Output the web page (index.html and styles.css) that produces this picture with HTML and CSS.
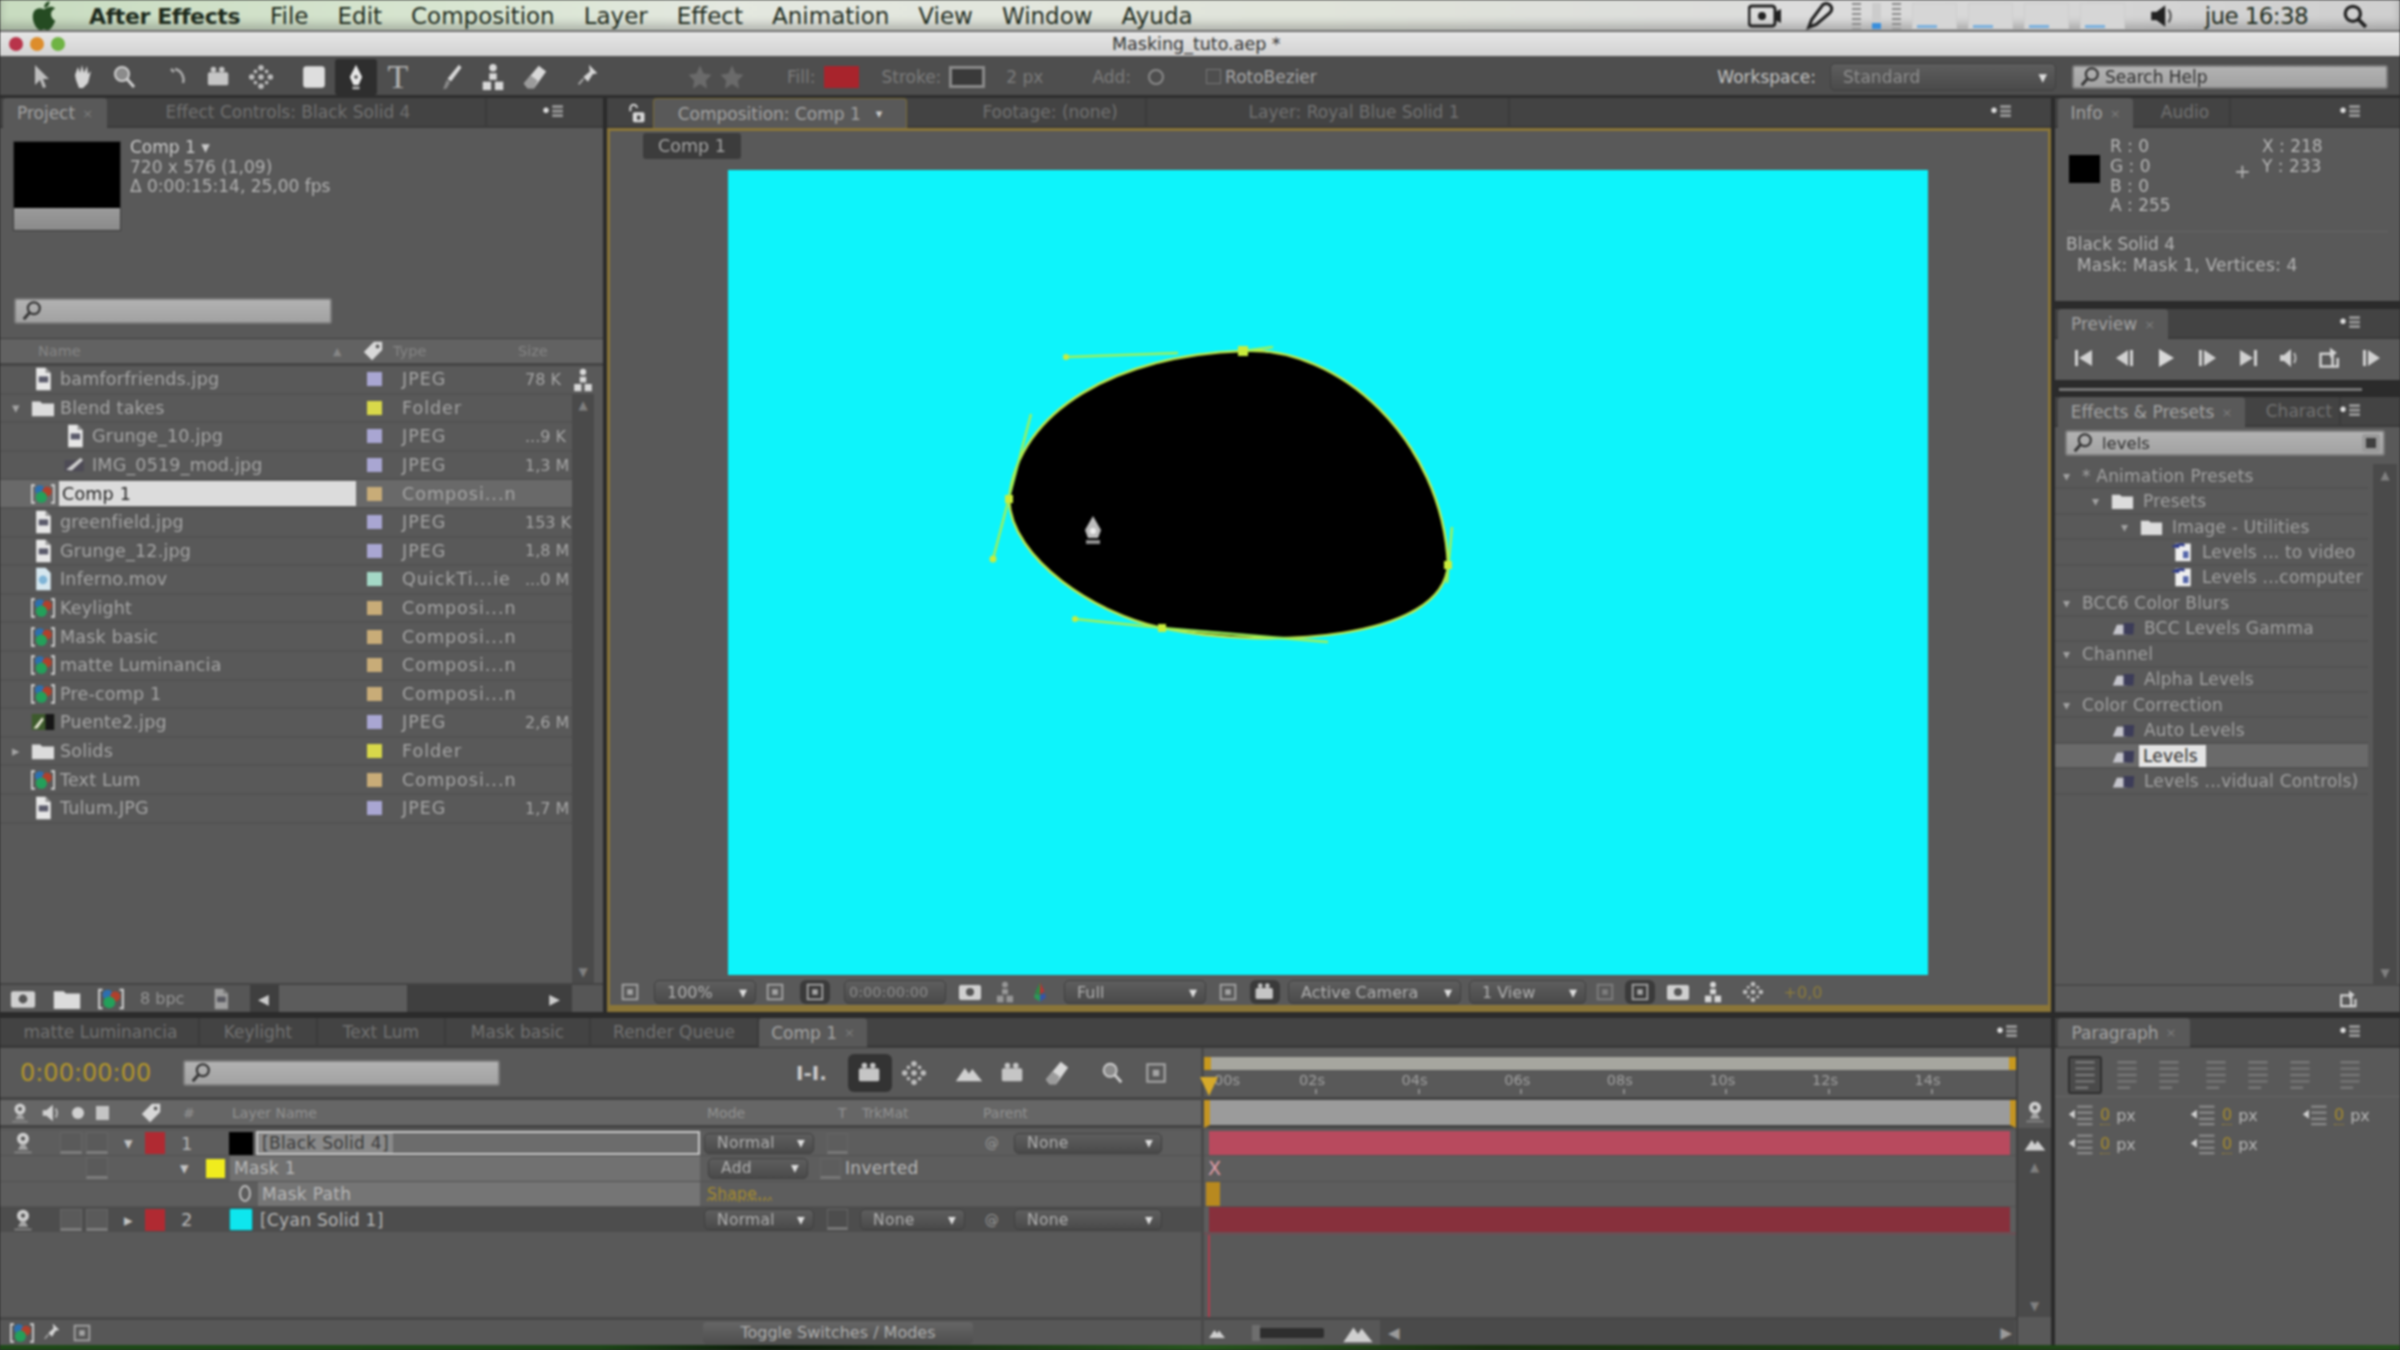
FILE: index.html
```html
<!DOCTYPE html>
<html lang="en">
<head>
    <meta charset="UTF-8">
    <title>After Effects - Masking_tuto.aep</title>
    <link rel="stylesheet" href="styles.css">
</head>
<body>

<svg class="sprite" width="0" height="0">
    <symbol id="file" viewBox="0 0 24 28"><path d="M4 1h11l6 6v20H4z" fill="#e6e6e6"/><path d="M15 1v6h6" fill="#999"/><rect x="7" y="11" width="11" height="7" fill="#5b5b6b"/></symbol>
    <symbol id="mov" viewBox="0 0 24 28"><path d="M4 1h11l6 6v20H4z" fill="#d5e6ee"/><circle cx="12" cy="15" r="5" fill="#7fb4d6"/></symbol>
    <symbol id="folder" viewBox="0 0 26 20"><path d="M1 3h9l2 2h13v14H1z" fill="#dcdcdc"/></symbol>
    <symbol id="comp" viewBox="0 0 30 26"><path d="M5 2H1v22h4M25 2h4v22h-4" fill="none" stroke="#d0d0d0" stroke-width="2.4"/><circle cx="11" cy="8" r="6" fill="#2d6fb0"/><circle cx="20" cy="10" r="6" fill="#b0402c"/><circle cx="13" cy="17" r="7" fill="#23a05a"/></symbol>
    <symbol id="photo" viewBox="0 0 30 24"><rect x="1" y="2" width="28" height="20" fill="#3d5a2c"/><rect x="18" y="2" width="11" height="20" fill="#161616"/><path d="M3 20L14 6l2 3-8 11z" fill="#e4e4d0"/></symbol>
    <symbol id="img" viewBox="0 0 30 24"><rect x="2" y="6" width="24" height="14" fill="#4d4a55"/><path d="M4 18L22 3l3 3-14 13z" fill="#ccc"/></symbol>
    <symbol id="fx" viewBox="0 0 28 20"><path d="M1 18L6 6h12v12z" fill="#c5c5cc"/><path d="M14 4h13l-1 14H14z" fill="#3c3c58"/></symbol>
    <symbol id="preset" viewBox="0 0 28 26"><rect x="6" y="2" width="20" height="23" fill="#eee"/><path d="M1 6Q8 0 18 2v4l-6-1-2 3z" fill="#2e3a88"/><rect x="16" y="12" width="7" height="9" fill="#5566aa"/></symbol>
    <symbol id="mag" viewBox="0 0 24 24"><circle cx="14" cy="9" r="6.5" fill="none" stroke="#333" stroke-width="2.4"/><path d="M9 14L3 21" stroke="#333" stroke-width="3.2"/></symbol>
    <symbol id="pmenu" viewBox="0 0 26 18"><circle cx="4" cy="7" r="3" fill="#ddd"/><path d="M11 3h12M11 8h12M11 13h12" stroke="#9a9a9a" stroke-width="3"/></symbol>
    <symbol id="eye" viewBox="0 0 24 28"><circle cx="12" cy="9" r="7" fill="#cfcfcf"/><circle cx="12" cy="9" r="2.5" fill="#555"/><path d="M10 15h4l4 7H6z" fill="#a5a5a5"/><rect x="2" y="24" width="20" height="2" fill="#8a8a8a"/></symbol>
    <symbol id="tag" viewBox="0 0 24 24"><path d="M2 13L13 2h9v9L11 22z" fill="#d8d8d8"/><circle cx="17" cy="7" r="2" fill="#555"/></symbol>
    <symbol id="arrow" viewBox="0 0 24 28"><path d="M7 2v20l5-5 3 8 3-1-3-8h6z" fill="#bdbdbd"/></symbol>
    <symbol id="hand" viewBox="0 0 24 28"><path d="M5 12l3-8 2 6 2-8 2 8 3-7 1 8 3-3-3 12-5 5H9l-3-8z" fill="#d5d5d5"/></symbol>
    <symbol id="zoomtool" viewBox="0 0 24 28"><circle cx="10" cy="11" r="7" fill="#8b8b8b" stroke="#cfcfcf" stroke-width="2"/><path d="M15 16l7 8" stroke="#cfcfcf" stroke-width="3"/></symbol>
    <symbol id="rotate" viewBox="0 0 24 28"><path d="M6 6l3 3M10 6a11 11 0 0 1 8 14" fill="none" stroke="#aaa" stroke-width="2.5"/></symbol>
    <symbol id="camera" viewBox="0 0 28 28"><rect x="2" y="9" width="22" height="14" rx="2" fill="#c5c5c5"/><circle cx="8" cy="6" r="3" fill="#c5c5c5"/><circle cx="17" cy="6" r="3" fill="#c5c5c5"/></symbol>
    <symbol id="panbehind" viewBox="0 0 28 28"><g fill="#bdbdbd"><circle cx="14" cy="4" r="3"/><circle cx="14" cy="24" r="3"/><circle cx="4" cy="14" r="3"/><circle cx="24" cy="14" r="3"/><circle cx="8" cy="8" r="2"/><circle cx="20" cy="8" r="2"/><circle cx="8" cy="20" r="2"/><circle cx="20" cy="20" r="2"/><circle cx="14" cy="14" r="3"/></g></symbol>
    <symbol id="rect" viewBox="0 0 24 24"><rect x="2" y="2" width="20" height="20" rx="3" fill="#dedede"/></symbol>
    <symbol id="pen" viewBox="0 0 24 32"><path d="M12 2l7 14-4 9H9l-4-9z" fill="#e8e8e8"/><circle cx="12" cy="16" r="2" fill="#444"/><rect x="8" y="27" width="8" height="3" fill="#bbb"/></symbol>
    <symbol id="brush" viewBox="0 0 24 32"><path d="M21 2l3 3-12 16-4-3z" fill="#d8d8d8"/><path d="M7 19l4 3-4 7-4 1z" fill="#888"/></symbol>
    <symbol id="clone" viewBox="0 0 26 30"><g fill="#d8d8d8"><circle cx="13" cy="5" r="4"/><rect x="9" y="11" width="8" height="7"/><rect x="2" y="20" width="9" height="9"/><rect x="15" y="20" width="9" height="9"/></g></symbol>
    <symbol id="eraser" viewBox="0 0 28 28"><path d="M18 2l8 6-13 18H6l-4-5z" fill="#d8d8d8"/><path d="M2 21l7-9 8 6-4 8H6z" fill="#9b9b9b"/></symbol>
    <symbol id="puppet" viewBox="0 0 26 30"><path d="M14 2l9 9-5 1-5 8-5-5 7-6z" fill="#d5d5d5"/><path d="M8 17l-5 6" stroke="#aaa" stroke-width="2"/></symbol>
    <symbol id="star" viewBox="0 0 24 24"><path d="M12 2l3 7 7 1-5 5 1 7-6-4-6 4 1-7-5-5 7-1z" fill="#6a6a6a"/></symbol>
    <symbol id="cam" viewBox="0 0 24 20"><rect x="1" y="3" width="22" height="15" rx="2" fill="#d0d0d0"/><circle cx="12" cy="10" r="4" fill="#555"/></symbol>
    <symbol id="small" viewBox="0 0 24 24"><rect x="4" y="4" width="16" height="16" fill="none" stroke="#a5a5a5" stroke-width="2"/><rect x="9" y="9" width="6" height="6" fill="#a5a5a5"/></symbol>
    <symbol id="rgb" viewBox="0 0 24 30"><path d="M12 2l6 12-6 4z" fill="#b33"/><path d="M12 2L5 16l7 2z" fill="#2c8a44"/><path d="M5 17l7 2v9l-8-5z" fill="#2b9a55"/><path d="M19 17l-7 2v9l8-5z" fill="#3555aa"/></symbol>
    <symbol id="mount" viewBox="0 0 34 24"><path d="M1 22L12 6l5 7 4-6 12 15z" fill="#cfcfcf"/></symbol>
    <symbol id="speaker" viewBox="0 0 24 24"><path d="M2 8h5l8-6v20l-8-6H2z" fill="#222"/><path d="M18 6q4 6 0 12" fill="none" stroke="#555" stroke-width="2"/></symbol>
    <symbol id="para" viewBox="0 0 30 40"><path d="M3 4h24M3 12h24M3 20h24M3 28h24M3 36h16" stroke="#777" stroke-width="3"/></symbol>
    <symbol id="indent" viewBox="0 0 34 30"><path d="M12 4h20M12 12h20M12 20h20M12 27h20" stroke="#8a8a8a" stroke-width="3"/><path d="M1 14l8-6v12z" fill="#d0d0d0"/></symbol>
    <symbol id="playfirst" viewBox="0 0 24 24"><path d="M3 4h3v16H3zM20 4v16L7 12z" fill="#d0d0d0"/></symbol>
    <symbol id="stepback" viewBox="0 0 24 24"><path d="M15 4v16L3 12zM17 4h3v16h-3z" fill="#d0d0d0"/></symbol>
    <symbol id="play" viewBox="0 0 24 24"><path d="M5 3v18l15-9z" fill="#d8d8d8"/></symbol>
    <symbol id="stepfwd" viewBox="0 0 24 24"><path d="M4 4h3v16H4zM9 4v16l12-8z" fill="#d0d0d0"/></symbol>
    <symbol id="playlast" viewBox="0 0 24 24"><path d="M4 4v16l13-8zM18 4h3v16h-3z" fill="#d0d0d0"/></symbol>
    <symbol id="audio" viewBox="0 0 24 24"><path d="M3 9h4l7-6v18l-7-6H3z" fill="#d0d0d0"/><path d="M17 7q3 5 0 10" stroke="#bbb" stroke-width="2" fill="none"/></symbol>
    <symbol id="loop" viewBox="0 0 28 28"><path d="M3 9h14v15H3z" fill="none" stroke="#d0d0d0" stroke-width="3"/><path d="M14 2l8 6-8 6z" fill="#d0d0d0"/><path d="M23 14v10h-6" fill="none" stroke="#d0d0d0" stroke-width="3"/></symbol>
    <symbol id="lockic" viewBox="0 0 24 24"><path d="M4 10V6a4 4 0 0 1 8 0" fill="none" stroke="#d0d0d0" stroke-width="2.4"/><rect x="7" y="11" width="14" height="12" rx="2" fill="#d8d8d8"/><rect x="12" y="15" width="4" height="5" fill="#444"/></symbol>
</svg>

<div class="app">

    <!-- mac menu bar -->
    <header class="menubar">
        <svg class="apple" viewBox="0 0 28 32"><path d="M14 9C9 6 2 8 2 17c0 7 5 14 8 14 2 0 3-1 4-1s2 1 4 1c3 0 6-5 8-10-6-3-6-11 0-13-3-3-8-2-12 1zM14 7c0-3 2-6 6-7 0 4-2 7-6 7z" fill="#254b22"/></svg>
        <span class="app-name">After Effects</span>
        <nav class="menus">
            <span>File</span><span>Edit</span><span>Composition</span><span>Layer</span><span>Effect</span><span>Animation</span><span>View</span><span>Window</span><span>Ayuda</span>
        </nav>
        <div class="status">
            <svg class="st-cam" viewBox="0 0 34 26"><rect x="1" y="3" width="26" height="20" rx="3" fill="none" stroke="#222" stroke-width="3"/><circle cx="14" cy="13" r="4" fill="#222"/><path d="M27 9l6-3v14l-6-3z" fill="#222"/></svg>
            <svg class="st-tool" viewBox="0 0 30 30"><path d="M27 5a6 6 0 0 0-9-2l-12 16-3 8 8-3 14-12a6 6 0 0 0 2-7z" fill="none" stroke="#222" stroke-width="3.4"/></svg>
            <div class="meters">
                <i class="meter-bar"></i><i class="meter-bar blue"></i><i class="meter-bar"></i>
                <i class="meter-box"></i><i class="meter-box"></i><i class="meter-box"></i><i class="meter-box"></i>
            </div>
            <svg class="st-vol"><use href="#speaker"/></svg>
            <span class="clock">jue 16:38</span>
            <svg class="st-search" viewBox="0 0 24 24"><circle cx="10" cy="10" r="7" fill="none" stroke="#222" stroke-width="3"/><path d="M15 15l7 7" stroke="#222" stroke-width="3.5"/></svg>
        </div>
    </header>

    <div class="titlebar">
        <div class="lights"><i class="red"></i><i class="amber"></i><i class="green"></i></div>
        <span class="doc-title">Masking_tuto.aep *</span>
    </div>

    <div class="toolbar">
        <div class="tools">
            <div class="tool"><svg><use href="#arrow"/></svg></div>
            <div class="tool"><svg><use href="#hand"/></svg></div>
            <div class="tool"><svg><use href="#zoomtool"/></svg></div>
        </div>
        <div class="tools">
            <div class="tool"><svg><use href="#rotate"/></svg></div>
            <div class="tool"><svg><use href="#camera"/></svg></div>
            <div class="tool"><svg><use href="#panbehind"/></svg></div>
        </div>
        <div class="tools">
            <div class="tool"><svg><use href="#rect"/></svg></div>
            <div class="tool on"><svg><use href="#pen"/></svg></div>
            <div class="tool"><span class="t-glyph">T</span></div>
        </div>
        <div class="tools">
            <div class="tool"><svg><use href="#brush"/></svg></div>
            <div class="tool"><svg><use href="#clone"/></svg></div>
            <div class="tool"><svg><use href="#eraser"/></svg></div>
        </div>
        <div class="tools">
            <div class="tool"><svg><use href="#puppet"/></svg></div>
        </div>
        <div class="tool-opts">
            <svg class="dim-ic"><use href="#star"/></svg>
            <svg class="dim-ic"><use href="#star"/></svg>
            <span class="opt-fill">Fill:</span>
            <i class="fill-box"></i>
            <span class="opt-stroke">Stroke:</span>
            <i class="stroke-box"></i>
            <span class="opt-px">2 px</span>
            <span class="opt-add">Add:</span>
            <i class="add-ic"></i>
            <i class="roto-check"></i>
            <span class="opt-roto">RotoBezier</span>
        </div>
        <div class="workspace">
            <span class="ws-label">Workspace:</span>
            <div class="sel ws-sel">Standard</div>
            <div class="search help-search"><svg><use href="#mag"/></svg><span>Search Help</span></div>
        </div>
    </div>

    <main class="desk">

        <!-- project -->
        <section class="panel project">
            <div class="tabs">
                <div class="tab active project-tab">Project <em>×</em></div>
                <div class="tab ghost effect-tab">Effect Controls: Black Solid 4</div>
                <svg class="pmenu"><use href="#pmenu"/></svg>
            </div>
            <div class="proj-info">
                <div class="thumb"><i></i></div>
                <div class="proj-meta">
                    <div class="meta-name">Comp 1 ▾</div>
                    <div>720 x 576 (1,09)</div>
                    <div>Δ 0:00:15:14, 25,00 fps</div>
                </div>
            </div>
            <div class="search proj-search"><svg><use href="#mag"/></svg></div>
            <div class="list-head">
                <span class="lh-name">Name</span>
                <span class="lh-sort">▲</span>
                <svg class="lh-tag"><use href="#tag"/></svg>
                <span class="lh-type">Type</span>
                <span>Size</span>
            </div>
            <div class="list-wrap">
                <div class="list">
                    <div class="pr"><div class="pn"><i class="tw"></i><svg class="ic"><use href="#file"/></svg><span>bamforfriends.jpg</span></div><i class="sw jpeg"></i><span class="ty">JPEG</span><span class="sz">78 K</span></div>
                    <div class="pr"><div class="pn"><i class="tw">▾</i><svg class="ic"><use href="#folder"/></svg><span>Blend takes</span></div><i class="sw fold"></i><span class="ty">Folder</span><span class="sz"></span></div>
                    <div class="pr"><div class="pn lv1"><i class="tw"></i><svg class="ic"><use href="#file"/></svg><span>Grunge_10.jpg</span></div><i class="sw jpeg"></i><span class="ty">JPEG</span><span class="sz">...9 K</span></div>
                    <div class="pr"><div class="pn lv1"><i class="tw"></i><svg class="ic"><use href="#img"/></svg><span>IMG_0519_mod.jpg</span></div><i class="sw jpeg"></i><span class="ty">JPEG</span><span class="sz">1,3 M</span></div>
                    <div class="pr sel-row"><div class="pn"><i class="tw"></i><svg class="ic"><use href="#comp"/></svg><span class="editing">Comp 1</span></div><i class="sw compo"></i><span class="ty">Composi...n</span><span class="sz"></span></div>
                    <div class="pr"><div class="pn"><i class="tw"></i><svg class="ic"><use href="#file"/></svg><span>greenfield.jpg</span></div><i class="sw jpeg"></i><span class="ty">JPEG</span><span class="sz">153 K</span></div>
                    <div class="pr"><div class="pn"><i class="tw"></i><svg class="ic"><use href="#file"/></svg><span>Grunge_12.jpg</span></div><i class="sw jpeg"></i><span class="ty">JPEG</span><span class="sz">1,8 M</span></div>
                    <div class="pr"><div class="pn"><i class="tw"></i><svg class="ic"><use href="#mov"/></svg><span>Inferno.mov</span></div><i class="sw qt"></i><span class="ty">QuickTi...ie</span><span class="sz">...0 M</span></div>
                    <div class="pr"><div class="pn"><i class="tw"></i><svg class="ic"><use href="#comp"/></svg><span>Keylight</span></div><i class="sw compo"></i><span class="ty">Composi...n</span><span class="sz"></span></div>
                    <div class="pr"><div class="pn"><i class="tw"></i><svg class="ic"><use href="#comp"/></svg><span>Mask basic</span></div><i class="sw compo"></i><span class="ty">Composi...n</span><span class="sz"></span></div>
                    <div class="pr"><div class="pn"><i class="tw"></i><svg class="ic"><use href="#comp"/></svg><span>matte Luminancia</span></div><i class="sw compo"></i><span class="ty">Composi...n</span><span class="sz"></span></div>
                    <div class="pr"><div class="pn"><i class="tw"></i><svg class="ic"><use href="#comp"/></svg><span>Pre-comp 1</span></div><i class="sw compo"></i><span class="ty">Composi...n</span><span class="sz"></span></div>
                    <div class="pr"><div class="pn"><i class="tw"></i><svg class="ic"><use href="#photo"/></svg><span>Puente2.jpg</span></div><i class="sw jpeg"></i><span class="ty">JPEG</span><span class="sz">2,6 M</span></div>
                    <div class="pr"><div class="pn"><i class="tw">▸</i><svg class="ic"><use href="#folder"/></svg><span>Solids</span></div><i class="sw fold"></i><span class="ty">Folder</span><span class="sz"></span></div>
                    <div class="pr"><div class="pn"><i class="tw"></i><svg class="ic"><use href="#comp"/></svg><span>Text Lum</span></div><i class="sw compo"></i><span class="ty">Composi...n</span><span class="sz"></span></div>
                    <div class="pr"><div class="pn"><i class="tw"></i><svg class="ic"><use href="#file"/></svg><span>Tulum.JPG</span></div><i class="sw jpeg"></i><span class="ty">JPEG</span><span class="sz">1,7 M</span></div>
                </div>
                <div class="proj-side">
                    <div class="flow-ic"><svg><use href="#clone"/></svg></div>
                    <div class="vscroll"><span>▲</span><span>▼</span></div>
                </div>
            </div>
            <div class="proj-foot">
                <svg class="pf-ic"><use href="#cam"/></svg>
                <svg class="pf-ic"><use href="#folder"/></svg>
                <svg class="pf-ic"><use href="#comp"/></svg>
                <span class="bpc">8 bpc</span>
                <svg class="pf-ic trash"><use href="#file"/></svg>
                <div class="hscroll"><span>◀</span><i></i><span>▶</span></div>
            </div>
        </section>

        <!-- composition viewer -->
        <section class="panel comp">
            <div class="tabs">
                <svg class="lock"><use href="#lockic"/></svg>
                <div class="tab active comp-tab">Composition: Comp 1 <b>▾</b></div>
                <div class="tab ghost foot-tab">Footage: (none)</div>
                <div class="tab ghost layer-tab">Layer: Royal Blue Solid 1</div>
                <svg class="pmenu"><use href="#pmenu"/></svg>
            </div>
            <div class="comp-frame">
                <div class="crumbs"><span class="crumb">Comp 1</span></div>
                <div class="viewer">
                    <div class="canvas">
                        <svg class="mask" viewBox="0 0 1200 805">
                            <path d="M515 181C610 175 715 270 720 395C715 470 540 480 434 458C370 445 283 390 281 329C290 240 390 185 515 181Z" fill="#000" stroke="#bfe84a" stroke-width="2.5"/>
                            <g stroke="#9cf05a" stroke-width="2.5">
                                <path d="M338 187L450 183"/>
                                <path d="M515 181L545 177"/>
                                <path d="M303 244L265 389"/>
                                <path d="M347 449L434 458"/>
                                <path d="M434 458L600 472"/>
                                <path d="M724 357L719 413"/>
                            </g>
                            <g fill="#c8ec3c">
                                <rect x="510" y="176" width="10" height="10"/>
                                <rect x="277" y="325" width="8" height="8"/>
                                <rect x="716" y="391" width="8" height="8"/>
                                <rect x="430" y="454" width="8" height="8"/>
                                <circle cx="265" cy="389" r="3.5"/>
                                <circle cx="338" cy="187" r="3"/>
                                <circle cx="347" cy="449" r="3"/>
                            </g>
                            <g transform="translate(356 346)">
                                <path d="M9 0L17 14L14 22H4L1 14Z" fill="#bdbdbd"/>
                                <circle cx="9" cy="15" r="3" fill="#eee"/>
                                <rect x="2" y="24" width="14" height="4" fill="#8f8f8f"/>
                            </g>
                        </svg>
                    </div>
                </div>
                <div class="view-foot">
                    <svg class="vf-ic"><use href="#small"/></svg>
                    <div class="sel vf-sel">100%</div>
                    <svg class="vf-ic"><use href="#small"/></svg>
                    <div class="vf-on"><svg class="vf-ic"><use href="#small"/></svg></div>
                    <div class="sel vf-sel vf-time">0:00:00:00</div>
                    <svg class="vf-ic"><use href="#cam"/></svg>
                    <svg class="vf-ic faint"><use href="#clone"/></svg>
                    <svg class="vf-ic"><use href="#rgb"/></svg>
                    <div class="sel vf-sel">Full</div>
                    <svg class="vf-ic"><use href="#small"/></svg>
                    <div class="vf-on"><svg class="vf-ic"><use href="#camera"/></svg></div>
                    <div class="sel vf-sel">Active Camera</div>
                    <div class="sel vf-sel">1 View</div>
                    <svg class="vf-ic faint"><use href="#small"/></svg>
                    <div class="vf-on"><svg class="vf-ic"><use href="#small"/></svg></div>
                    <svg class="vf-ic"><use href="#cam"/></svg>
                    <svg class="vf-ic"><use href="#clone"/></svg>
                    <svg class="vf-ic"><use href="#panbehind"/></svg>
                    <span class="exposure">+0,0</span>
                </div>
            </div>
        </section>

        <!-- info / preview / effects -->
        <aside class="side">
            <section class="panel info">
                <div class="tabs">
                    <div class="tab active info-tab">Info <em>×</em></div>
                    <div class="tab ghost audio-tab">Audio</div>
                    <svg class="pmenu"><use href="#pmenu"/></svg>
                </div>
                <div class="info-top">
                    <i class="info-swatch"></i>
                    <div class="info-rgb">
                        <div>R : 0</div><div>G : 0</div><div>B : 0</div><div>A : 255</div>
                    </div>
                    <div class="info-cross">+</div>
                    <div class="info-xy">
                        <div>X : 218</div><div>Y : 233</div>
                    </div>
                </div>
                <div class="info-msg">
                    <div>Black Solid 4</div>
                    <div class="info-msg2">Mask: Mask 1, Vertices: 4</div>
                </div>
            </section>
            <section class="panel preview">
                <div class="tabs">
                    <div class="tab active preview-tab">Preview <em>×</em></div>
                    <svg class="pmenu"><use href="#pmenu"/></svg>
                </div>
                <div class="transport">
                    <svg><use href="#playfirst"/></svg>
                    <svg><use href="#stepback"/></svg>
                    <svg><use href="#play"/></svg>
                    <svg><use href="#stepfwd"/></svg>
                    <svg><use href="#playlast"/></svg>
                    <svg><use href="#audio"/></svg>
                    <svg><use href="#loop"/></svg>
                    <svg><use href="#stepfwd"/></svg>
                </div>
            </section>
            <div class="side-split"><i></i></div>
            <section class="panel effects">
                <div class="tabs">
                    <div class="tab active fx-tab">Effects &amp; Presets <em>×</em></div>
                    <div class="tab ghost char-tab">Charact</div>
                    <svg class="pmenu"><use href="#pmenu"/></svg>
                </div>
                <div class="search fx-search"><svg><use href="#mag"/></svg><span>levels</span><i class="fx-clear"></i></div>
                <div class="fx-wrap">
                    <div class="fx-list">
                        <div class="fr"><b>▾</b><span>* Animation Presets</span></div>
                        <div class="fr in2"><b>▾</b><svg class="fi"><use href="#folder"/></svg><span>Presets</span></div>
                        <div class="fr in3"><b>▾</b><svg class="fi"><use href="#folder"/></svg><span>Image - Utilities</span></div>
                        <div class="fr in4"><svg class="fi"><use href="#preset"/></svg><span>Levels ... to video</span></div>
                        <div class="fr in4"><svg class="fi"><use href="#preset"/></svg><span>Levels ...computer</span></div>
                        <div class="fr"><b>▾</b><span>BCC6 Color Blurs</span></div>
                        <div class="fr in1"><svg class="fi"><use href="#fx"/></svg><span>BCC Levels Gamma</span></div>
                        <div class="fr"><b>▾</b><span>Channel</span></div>
                        <div class="fr in1"><svg class="fi"><use href="#fx"/></svg><span>Alpha Levels</span></div>
                        <div class="fr"><b>▾</b><span>Color Correction</span></div>
                        <div class="fr in1"><svg class="fi"><use href="#fx"/></svg><span>Auto Levels</span></div>
                        <div class="fr in1 fr-sel"><svg class="fi"><use href="#fx"/></svg><span class="fx-edit">Levels</span></div>
                        <div class="fr in1"><svg class="fi"><use href="#fx"/></svg><span>Levels ...vidual Controls)</span></div>
                    </div>
                    <div class="vscroll fx-scroll"><span>▲</span><span>▼</span></div>
                </div>
                <div class="fx-foot"><svg><use href="#loop"/></svg></div>
            </section>
        </aside>

        <!-- timeline -->
        <section class="panel timeline">
            <div class="tabs tl-tabs">
                <div class="tab ghost tl-t1">matte Luminancia</div>
                <div class="tab ghost tl-t2">Keylight</div>
                <div class="tab ghost tl-t3">Text Lum</div>
                <div class="tab ghost tl-t4">Mask basic</div>
                <div class="tab ghost tl-t5">Render Queue</div>
                <div class="tab active tl-t6">Comp 1 <em>×</em></div>
                <svg class="pmenu"><use href="#pmenu"/></svg>
            </div>
            <div class="tl-body">
                <div class="tl-left">
                    <div class="tl-ctrl">
                        <span class="timecode">0:00:00:00</span>
                        <div class="search tl-search"><svg><use href="#mag"/></svg></div>
                        <div class="tl-btns">
                            <span class="tb-txt">I-I.</span>
                            <div class="tb tb-on"><svg><use href="#camera"/></svg></div>
                            <div class="tb"><svg><use href="#panbehind"/></svg></div>
                            <div class="tb tb-gap"><svg><use href="#mount"/></svg></div>
                            <div class="tb"><svg><use href="#camera"/></svg></div>
                            <div class="tb"><svg><use href="#eraser"/></svg></div>
                            <div class="tb tb-gap"><svg><use href="#zoomtool"/></svg></div>
                            <div class="tb"><svg><use href="#small"/></svg></div>
                        </div>
                    </div>
                    <div class="tl-head">
                        <svg class="th-ic"><use href="#eye"/></svg>
                        <svg class="th-ic"><use href="#audio"/></svg>
                        <i class="th-dot"></i>
                        <i class="th-lock"></i>
                        <svg class="th-tag"><use href="#tag"/></svg>
                        <span class="th-num">#</span>
                        <span class="th-name">Layer Name</span>
                        <span class="th-mode">Mode</span>
                        <span class="th-t">T</span>
                        <span class="th-trk">TrkMat</span>
                        <span class="th-par">Parent</span>
                    </div>
                    <div class="lr lr-first">
                        <svg class="c-eye"><use href="#eye"/></svg>
                        <i class="c-box"></i><i class="c-box"></i>
                        <span class="c-tw">▾</span>
                        <i class="c-label"></i>
                        <span class="c-num">1</span>
                        <i class="c-color black"></i>
                        <div class="c-name editing-name"><span>[Black Solid 4]</span></div>
                        <div class="sel c-mode">Normal</div>
                        <i class="c-t"></i>
                        <span class="c-empty"></span>
                        <span class="c-pi">@</span>
                        <div class="sel c-par">None</div>
                    </div>
                    <div class="lr">
                        <span class="m-sp1"></span>
                        <i class="c-box"></i>
                        <span class="m-sp2"></span>
                        <span class="c-tw m-tw">▾</span>
                        <i class="c-color yellow"></i>
                        <div class="c-name mask-name">Mask 1</div>
                        <div class="sel c-mode add-mode">Add</div>
                        <i class="c-t"></i>
                        <span class="invert">Inverted</span>
                    </div>
                    <div class="lr">
                        <span class="p-sp"></span>
                        <span class="clock-ic"></span>
                        <div class="c-name path-name">Mask Path</div>
                        <span class="shape">Shape...</span>
                    </div>
                    <div class="lr lr-dark">
                        <svg class="c-eye"><use href="#eye"/></svg>
                        <i class="c-box"></i><i class="c-box"></i>
                        <span class="c-tw">▸</span>
                        <i class="c-label"></i>
                        <span class="c-num">2</span>
                        <i class="c-color cyan"></i>
                        <div class="c-name">[Cyan Solid 1]</div>
                        <div class="sel c-mode">Normal</div>
                        <i class="c-t"></i>
                        <div class="sel c-trk">None</div>
                        <span class="c-pi">@</span>
                        <div class="sel c-par">None</div>
                    </div>
                    <div class="tl-fill"></div>
                    <div class="tl-foot">
                        <svg class="tf-ic"><use href="#comp"/></svg>
                        <svg class="tf-ic"><use href="#puppet"/></svg>
                        <svg class="tf-ic"><use href="#small"/></svg>
                        <div class="toggle-btn">Toggle Switches / Modes</div>
                    </div>
                </div>
                <div class="tl-right">
                    <div class="ruler">
                        <div class="workarea"></div>
                        <div class="ticks">
                            <span>00s</span><span>02s</span><span>04s</span><span>06s</span><span>08s</span><span>10s</span><span>12s</span><span>14s</span>
                        </div>
                        <i class="playhead"></i>
                    </div>
                    <div class="track-head"></div>
                    <div class="track track-first"><i class="bar bar-on"></i></div>
                    <div class="track"><span class="kf-x">X</span></div>
                    <div class="track"><i class="kf-gold"></i></div>
                    <div class="track track-dark"><i class="bar bar-off"></i></div>
                    <div class="tr-fill"><i class="cti"></i></div>
                    <div class="tr-foot">
                        <svg class="zm zm-small"><use href="#mount"/></svg>
                        <div class="zoom-slider"><i></i></div>
                        <svg class="zm"><use href="#mount"/></svg>
                        <div class="tr-hbar"><span>◀</span><span>▶</span></div>
                    </div>
                </div>
                <div class="tl-side">
                    <div class="ts-top"></div>
                    <div class="ts-nav"><svg><use href="#eye"/></svg></div>
                    <div class="ts-zoom"><svg><use href="#mount"/></svg></div>
                    <div class="vscroll ts-scroll"><span>▲</span><span>▼</span></div>
                    <div class="ts-foot"></div>
                </div>
            </div>
        </section>

        <!-- paragraph -->
        <section class="panel paragraph">
            <div class="tabs">
                <div class="tab active para-tab">Paragraph <em>×</em></div>
                <svg class="pmenu"><use href="#pmenu"/></svg>
            </div>
            <div class="aligns">
                <div class="al al-on"><svg><use href="#para"/></svg></div>
                <div class="al"><svg><use href="#para"/></svg></div>
                <div class="al"><svg><use href="#para"/></svg></div>
                <div class="al al-gap"><svg><use href="#para"/></svg></div>
                <div class="al"><svg><use href="#para"/></svg></div>
                <div class="al"><svg><use href="#para"/></svg></div>
                <div class="al al-gap2"><svg><use href="#para"/></svg></div>
            </div>
            <div class="indents">
                <div class="ind"><svg><use href="#indent"/></svg><b>0</b> px</div>
                <div class="ind"><svg><use href="#indent"/></svg><b>0</b> px</div>
                <div class="ind"><svg><use href="#indent"/></svg><b>0</b> px</div>
                <div class="ind"><svg><use href="#indent"/></svg><b>0</b> px</div>
                <div class="ind"><svg><use href="#indent"/></svg><b>0</b> px</div>
            </div>
        </section>
    </main>

    <div class="desktop-strip"></div>
</div>

</body>
</html>
```

FILE: styles.css
```css
/* Base */
* {
    margin: 0;
    padding: 0;
    box-sizing: border-box;
}

body {
    width: 2400px;
    height: 1350px;
    overflow: hidden;
    background: #2b2b2b;
    font-family: "DejaVu Sans", sans-serif;
    font-size: 17px;
    color: #bcbcbc;
}

i, em, b {
    font-style: normal;
    font-weight: normal;
}

.sprite {
    position: absolute;
}

/* the whole reference is a soft video frame */
.app {
    width: 2400px;
    height: 1350px;
    display: flex;
    flex-direction: column;
    filter: blur(1.1px);
}

/* Menu bar */
.menubar {
    height: 32px;
    display: flex;
    align-items: center;
    padding: 2px 0 0 30px;
    color: #1d2a1c;
    font-size: 23px;
    background: linear-gradient(90deg, #c8dcc0 0, #d9e6d2 20%, #e4e8e0 30%, #e0e4da 55%, #dcdcdc 75%, #cfcfcf 100%);
    box-shadow: inset 0 -6px 8px rgba(60, 60, 60, 0.28);
    border-bottom: 2px solid #6e6e6e;
}

.apple {
    width: 28px;
    height: 30px;
    flex: none;
}

.app-name {
    margin-left: 31px;
    width: 181px;
    font-size: 22px;
    font-weight: bold;
    letter-spacing: -0.4px;
}

.menus {
    display: flex;
    gap: 29px;
}

.status {
    margin-left: auto;
    display: flex;
    align-items: center;
    height: 100%;
}

.st-cam {
    width: 34px;
    height: 26px;
}

.st-tool {
    width: 30px;
    height: 28px;
    margin-left: 23px;
}

.meters {
    display: flex;
    gap: 11px;
    height: 26px;
    margin-left: 17px;
    width: 276px;
}

.meter-bar {
    width: 9px;
    background: repeating-linear-gradient(180deg, #888 0 2px, transparent 2px 5px);
}

.meter-bar.blue {
    background: linear-gradient(180deg, #ccc 0 78%, #3a8fdc 78%);
}

.meter-box {
    width: 45px;
    background: linear-gradient(#7ab0de, #7ab0de) 4px 100% / 20px 3px no-repeat, #d6d6d6;
    border: 1px solid #cdcdcd;
}

.st-vol {
    width: 34px;
    height: 26px;
    margin-left: 17px;
}

.clock {
    margin-left: 26px;
    letter-spacing: -0.6px;
}

.st-search {
    width: 26px;
    height: 26px;
    margin-left: 34px;
    margin-right: 32px;
}

/* Window title */
.titlebar {
    height: 24px;
    display: flex;
    align-items: center;
    padding-left: 9px;
    background: linear-gradient(180deg, #e6e6e6, #d2d2d2);
    color: #333;
    font-size: 17.5px;
}

.lights {
    display: flex;
    gap: 7px;
    width: 1103px;
}

.lights i {
    width: 14px;
    height: 14px;
    border-radius: 50%;
}

.lights .red {
    background: #b8344a;
}

.lights .amber {
    background: #dd8d2c;
}

.lights .green {
    background: #6fb344;
}

/* Tool bar */
.toolbar {
    height: 42px;
    display: flex;
    align-items: center;
    padding: 2px 0 0 19px;
    background: #4e4e4e;
    border-bottom: 3px solid #2e2e2e;
    color: #7c7c7c;
    font-size: 17px;
}

.tools {
    display: flex;
    margin-right: 11px;
}

.tool {
    width: 42px;
    height: 36px;
    display: flex;
    align-items: center;
    justify-content: center;
    border-radius: 3px;
}

.tool svg {
    width: 26px;
    height: 28px;
}

.tool.on {
    background: #2e2e2e;
}

.t-glyph {
    font-family: "Liberation Serif", serif;
    font-size: 34px;
    color: #b4b4b4;
    line-height: 1;
}

.tool-opts {
    display: flex;
    align-items: center;
    margin-left: 66px;
}

.dim-ic {
    width: 28px;
    height: 28px;
    margin-right: 4px;
}

.opt-fill {
    margin-left: 37px;
}

.fill-box {
    width: 35px;
    height: 22px;
    margin-left: 9px;
    background: #a8242c;
}

.opt-stroke {
    margin-left: 22px;
}

.stroke-box {
    width: 36px;
    height: 22px;
    margin-left: 8px;
    border: 3px solid #8a8a8a;
    background: #3a3a3a;
}

.opt-px {
    margin-left: 21px;
}

.opt-add {
    margin-left: 49px;
}

.add-ic {
    width: 16px;
    height: 16px;
    margin-left: 17px;
    border: 2px solid #8a8a8a;
    border-radius: 50%;
}

.roto-check {
    width: 15px;
    height: 15px;
    margin-left: 42px;
    border: 1px solid #777;
}

.opt-roto {
    margin-left: 4px;
    color: #a8a8a8;
}

.workspace {
    margin-left: auto;
    display: flex;
    align-items: center;
    padding: 1px 12px 0 0;
}

.ws-label {
    color: #c4c4c4;
    margin-right: 14px;
}

/* Shared controls */
.sel {
    position: relative;
    display: flex;
    align-items: center;
    height: 100%;
    padding-left: 12px;
    border-radius: 5px;
    background: linear-gradient(180deg, #5e5e5e, #4a4a4a);
    border: 1px solid #3f3f3f;
    color: #b0b0b0;
    white-space: nowrap;
}

.sel::after {
    content: "▾";
    position: absolute;
    right: 8px;
    color: #ddd;
}

.search {
    display: flex;
    align-items: center;
    padding-left: 5px;
    background: linear-gradient(180deg, #b2b2b2, #a2a2a2);
    border: 2px solid #7d7d7d;
    border-radius: 3px;
    color: #2e2e2e;
}

.search svg {
    width: 22px;
    height: 22px;
    flex: none;
}

.ws-sel {
    width: 226px;
    height: 28px;
    color: #8f8f8f;
}

.help-search {
    width: 316px;
    height: 24px;
    margin-left: 16px;
    color: #2e2e2e;
}

.help-search span {
    margin-left: 4px;
}

/* Panels */
.desk {
    flex: 1;
    display: grid;
    grid-template-columns: 603px 1444px 345px;
    grid-template-rows: 914px 327px;
    column-gap: 4px;
    row-gap: 6px;
}

.panel {
    background: #595959;
    display: flex;
    flex-direction: column;
    min-width: 0;
}

.tabs {
    position: relative;
    height: 30px;
    flex: none;
    display: flex;
    align-items: stretch;
    background: #434343;
    border-bottom: 2px solid #3a3a3a;
    padding-left: 3px;
    font-size: 17px;
    white-space: nowrap;
}

.tab {
    display: flex;
    align-items: center;
    justify-content: center;
    gap: 7px;
    flex: none;
}

.tab em {
    color: #7d7d7d;
    font-size: 13px;
}

.tab.active {
    background: #595959;
    color: #a4a4a4;
    border-radius: 4px 4px 0 0;
    margin-bottom: -2px;
}

.tab.ghost {
    color: #727272;
    border-right: 2px solid #3a3a3a;
}

.pmenu {
    position: absolute;
    right: 37px;
    top: 6px;
    width: 24px;
    height: 16px;
}

/* Project panel */
.project-tab {
    width: 104px;
}

.effect-tab {
    width: 380px;
    padding-right: 16px;
}

.proj-info {
    display: flex;
    height: 170px;
    padding: 13px 0 0 13px;
}

.thumb {
    width: 108px;
    height: 90px;
    background: #000;
    border: 1px solid #3a3a3a;
    display: flex;
    align-items: flex-end;
}

.thumb i {
    display: block;
    width: 100%;
    height: 22px;
    background: linear-gradient(180deg, #9b9b9b, #8a8a8a);
}

.proj-meta {
    margin: -3px 0 0 9px;
    line-height: 19.5px;
    font-size: 17px;
    color: #b2b2b2;
}

.meta-name {
    color: #cacaca;
}

.proj-search {
    width: 318px;
    height: 26px;
    margin-left: 14px;
    flex: none;
}

.list-head {
    margin-top: 14px;
    height: 28px;
    flex: none;
    display: flex;
    align-items: center;
    background: #626262;
    border-top: 1px solid #3e3e3e;
    border-bottom: 3px solid #454545;
    font-size: 14.5px;
    color: #868686;
}

.lh-name {
    margin-left: 38px;
    width: 295px;
}

.lh-sort {
    width: 28px;
    font-size: 11px;
}

.lh-tag {
    width: 24px;
    height: 22px;
}

.lh-type {
    margin-left: 8px;
    width: 125px;
}

.list-wrap {
    flex: 1;
    display: flex;
}

.list {
    width: 572px;
}

.pr {
    height: 28.6px;
    display: grid;
    grid-template-columns: 367px 35px 123px 47px;
    align-items: center;
    border-bottom: 2px solid #525252;
    font-size: 17.5px;
    letter-spacing: 0.2px;
    color: #a6a6a6;
    white-space: nowrap;
}

.ty {
    letter-spacing: 1px;
}

.pn {
    display: flex;
    align-items: center;
    height: 100%;
}

.lv1 {
    padding-left: 32px;
}

.tw {
    width: 31px;
    padding-left: 12px;
    font-size: 15px;
    color: #a5a5a5;
}

.ic {
    width: 24px;
    height: 24px;
    flex: none;
}

.pn span {
    margin-left: 5px;
}

.sw {
    width: 15px;
    height: 14px;
}

.sw.jpeg {
    background: #a9a6d2;
}

.sw.fold {
    background: #d8d84a;
}

.sw.compo {
    background: #c8ac78;
}

.sw.qt {
    background: #a4d8c6;
}

.sz {
    font-size: 16px;
    letter-spacing: 0;
}

.sel-row {
    background: #696969;
}

.pn span.editing {
    align-self: stretch;
    flex: 1;
    display: flex;
    align-items: center;
    margin: 1px 11px 1px 4px;
    padding-left: 3px;
    background: #dcdcdc;
    color: #222;
}

.proj-side {
    width: 22px;
    display: flex;
    flex-direction: column;
}

.flow-ic {
    height: 28px;
    flex: none;
    display: flex;
    align-items: center;
    justify-content: center;
}

.flow-ic svg {
    width: 22px;
    height: 24px;
}

.vscroll {
    flex: 1;
    display: flex;
    flex-direction: column;
    justify-content: space-between;
    align-items: center;
    width: 22px;
    padding: 4px 0;
    background: #4a4a4a;
    color: #808080;
    font-size: 12px;
}

.proj-foot {
    height: 29px;
    flex: none;
    display: flex;
    align-items: center;
    padding-left: 8px;
    background: #565656;
    border-top: 2px solid #444;
}

.pf-ic {
    width: 30px;
    height: 22px;
    margin-right: 14px;
}

.bpc {
    width: 66px;
    font-size: 16px;
    color: #969696;
}

.pf-ic.trash {
    margin-right: 0;
    opacity: 0.5;
}

.hscroll {
    display: flex;
    align-items: center;
    justify-content: space-between;
    width: 322px;
    height: 100%;
    margin-left: 14px;
    padding: 0 12px 0 8px;
    background: #3f3f3f;
    color: #ccc;
    font-size: 14px;
}

.hscroll i {
    width: 128px;
    height: 100%;
    margin: 0 auto 0 10px;
    background: #5c5c5c;
}

/* Composition panel */
.lock {
    width: 20px;
    height: 20px;
    margin: 5px 0 0 17px;
    flex: none;
}

.comp-tab {
    width: 254px;
    margin-left: 6px;
    border: 1px solid #7b6b35;
    border-bottom: 0;
}

.comp-tab b {
    font-size: 13px;
    margin-left: 8px;
    color: #ccc;
}

.foot-tab {
    width: 240px;
    padding-left: 48px;
    border: 0;
}

.layer-tab {
    width: 310px;
    margin-left: 53px;
    border: 0;
}

.comp-frame {
    flex: 1;
    display: flex;
    flex-direction: column;
    border: solid #8a7538;
    border-width: 3px 3px 7px;
}

.crumbs {
    height: 39px;
    flex: none;
    padding: 2px 0 0 33px;
}

.crumb {
    display: inline-flex;
    align-items: center;
    justify-content: center;
    width: 98px;
    height: 26px;
    background: #3c3c3c;
    border-radius: 3px;
    font-size: 17.5px;
    color: #a5a5a5;
}

.viewer {
    flex: none;
    height: 805px;
    padding-left: 118px;
}

.canvas {
    position: relative;
    width: 1200px;
    height: 805px;
    background: #0df4fb;
}

.mask {
    position: absolute;
    left: 0;
    top: 0;
    width: 1200px;
    height: 805px;
}

.view-foot {
    flex: 1;
    display: grid;
    grid-template-columns: 40px 110px 30px 50px 110px 40px 30px 40px 150px 36px 38px 181px 125px 30px 40px 35px 35px 46px 54px;
    align-items: center;
    justify-items: center;
    padding: 5px 0 1px;
    font-size: 16px;
}

.vf-ic {
    width: 24px;
    height: 22px;
}

.vf-ic.faint {
    opacity: 0.5;
}

.vf-sel {
    width: calc(100% - 8px);
}

.vf-time {
    padding-left: 4px;
    font-size: 14.5px;
    color: #8c8c8c;
}

.vf-time::after {
    content: none;
}

.vf-on {
    width: 30px;
    height: 100%;
    display: flex;
    align-items: center;
    justify-content: center;
    background: #3a3a3a;
    border-radius: 6px;
}

.exposure {
    color: #8d7c3b;
}

/* Right column */
.side {
    grid-row: 1;
    grid-column: 3;
    display: flex;
    flex-direction: column;
    min-height: 0;
}

.info {
    height: 203px;
    flex: none;
}

.info-tab {
    width: 75px;
}

.audio-tab {
    width: 98px;
    border-right: 2px solid #3a3a3a;
    padding-left: 8px;
}

.info-top {
    display: flex;
    height: 95px;
    margin: 9px 12px 0;
    border-bottom: 1px solid #666;
    font-size: 17px;
    line-height: 19.8px;
    color: #b6b6b6;
}

.info-swatch {
    width: 31px;
    height: 28px;
    margin: 18px 0 0 2px;
    background: #000;
}

.info-rgb {
    margin-left: 10px;
    width: 124px;
}

.info-cross {
    margin-top: 25px;
    width: 28px;
    font-size: 20px;
}

.info-msg {
    padding: 2px 0 0 11px;
    line-height: 21px;
    color: #b6b6b6;
}

.info-msg2 {
    padding-left: 11px;
    letter-spacing: 0.2px;
}

.preview {
    margin-top: 8px;
    height: 71px;
    flex: none;
}

.preview-tab {
    width: 110px;
}

.transport {
    flex: 1;
    display: flex;
    align-items: center;
    padding: 0 0 4px 17px;
    gap: 17px;
}

.transport svg {
    width: 24px;
    height: 24px;
}

.side-split {
    height: 17px;
    flex: none;
    padding-top: 8px;
}

.side-split i {
    display: block;
    width: 303px;
    height: 3px;
    margin-left: 4px;
    background: #777;
}

.effects {
    flex: 1;
    min-height: 0;
}

.fx-tab {
    width: 187px;
}

.char-tab {
    padding-left: 14px;
    width: 96px;
    border: 0;
}

.fx-search {
    flex: none;
    width: 320px;
    height: 26px;
    margin: 3px 0 0 10px;
    font-size: 16.5px;
}

.fx-search span {
    margin-left: 8px;
}

.fx-clear {
    margin-left: auto;
    width: 18px;
    height: 18px;
    margin-right: 3px;
    background: #3f3f3f;
    border: 4px solid #999;
    border-radius: 3px;
}

.fx-wrap {
    flex: 1;
    display: flex;
    margin-top: 8px;
}

.fx-list {
    width: 313px;
    font-size: 17px;
    letter-spacing: 0.2px;
    color: #a2a2a2;
    white-space: nowrap;
}

.fr {
    height: 25.45px;
    display: flex;
    align-items: center;
    padding-left: 8px;
    border-bottom: 2px solid #525252;
}

.fr b {
    width: 19px;
    flex: none;
    font-size: 14px;
}

.fr.in1 {
    padding-left: 57px;
}

.fr.in2 {
    padding-left: 37px;
}

.fr.in3 {
    padding-left: 66px;
}

.fr.in4 {
    padding-left: 115px;
}

.fi {
    width: 23px;
    height: 20px;
    flex: none;
    margin-right: 9px;
}

.fr-sel {
    background: #6a6a6a;
}

.fx-edit {
    background: #e4e4e4;
    color: #2a2a2a;
    padding: 1px 8px 1px 4px;
    margin-left: -5px;
}

.fx-scroll {
    flex: none;
    margin-left: 5px;
    width: 24px;
}

.fx-foot {
    height: 28px;
    flex: none;
    display: flex;
    align-items: center;
    justify-content: flex-end;
    padding-right: 41px;
    border-top: 2px solid #4a4a4a;
}

.fx-foot svg {
    width: 20px;
    height: 20px;
}

/* Timeline */
.timeline {
    grid-row: 2;
    grid-column: 1 / 3;
}

.tabs.tl-tabs {
    border-bottom: 3px solid #3a3a3a;
}

.tl-t1 {
    width: 197px;
}

.tl-t2 {
    width: 118px;
}

.tl-t3 {
    width: 128px;
}

.tl-t4 {
    width: 145px;
}

.tl-t5 {
    width: 168px;
}

.tl-t6 {
    width: 108px;
    margin-bottom: -3px;
}

.timeline .pmenu {
    right: 31px;
}

.tl-body {
    flex: 1;
    display: flex;
    min-height: 0;
}

.tl-left {
    width: 1204px;
    display: flex;
    flex-direction: column;
    border-right: 3px solid #4a4a4a;
    flex: none;
}

.tl-ctrl {
    height: 52px;
    flex: none;
    display: flex;
    align-items: center;
    padding-left: 20px;
    border-bottom: 3px solid #444;
}

.timecode {
    width: 163px;
    font-size: 24px;
    color: #b4962a;
}

.tl-search {
    width: 317px;
    height: 26px;
}

.tl-btns {
    display: flex;
    align-items: center;
    margin-left: 296px;
}

.tb-txt {
    width: 52px;
    font-size: 20px;
    font-weight: bold;
    color: #ccc;
}

.tb {
    width: 44px;
    height: 38px;
    display: flex;
    align-items: center;
    justify-content: center;
    border-radius: 6px;
}

.tb svg {
    width: 28px;
    height: 26px;
}

.tb-on {
    background: #333;
}

.tb-gap {
    margin-left: 11px;
}

.tl-head {
    height: 28px;
    flex: none;
    display: flex;
    align-items: center;
    background: #666;
    border-bottom: 3px solid #444;
    font-size: 14px;
    color: #929292;
}

.th-ic {
    width: 22px;
    height: 22px;
    margin-left: 9px;
}

.th-dot {
    width: 12px;
    height: 12px;
    margin-left: 10px;
    border-radius: 50%;
    background: #d0d0d0;
}

.th-lock {
    width: 13px;
    height: 14px;
    margin-left: 12px;
    background: #c4c4c4;
}

.th-tag {
    width: 24px;
    height: 22px;
    margin-left: 30px;
}

.th-num {
    margin-left: 20px;
    width: 49px;
}

.th-name {
    width: 475px;
}

.th-mode {
    width: 131px;
}

.th-t {
    width: 24px;
}

.th-trk {
    width: 121px;
}

.lr {
    height: 25.3px;
    flex: none;
    display: flex;
    align-items: center;
    background: #5d5d5d;
    border-bottom: 1px solid #525252;
    font-size: 17px;
    letter-spacing: 0.3px;
    color: #b8b8b8;
    white-space: nowrap;
}

.lr-first {
    margin-top: 3px;
}

.lr-dark {
    background: #4d4d4d;
    border-bottom: 0;
}

.c-eye {
    width: 26px;
    height: 24px;
    margin: 0 24px 0 10px;
    flex: none;
}

.c-box {
    width: 22px;
    height: 22px;
    margin-right: 4px;
    flex: none;
    background: #5a5a5a;
    border: 1px solid #666;
    border-bottom: 3px solid #7d7d7d;
}

.c-tw {
    width: 33px;
    flex: none;
    padding-left: 12px;
    color: #c4c4c4;
}

.c-label {
    width: 20px;
    height: 22px;
    flex: none;
    background: #b02a32;
}

.c-num {
    width: 64px;
    flex: none;
    padding-left: 16px;
    font-size: 18px;
}

.c-color {
    width: 24px;
    height: 23px;
    flex: none;
    margin-right: 3px;
}

.c-color.black {
    background: #000;
}

.c-color.yellow {
    width: 19px;
    height: 19px;
    margin-right: 5px;
    background: #f0ec1e;
}

.c-color.cyan {
    background: #0ee6ee;
    border: 1px solid #2a6a6e;
    border-radius: 2px;
}

.c-name {
    width: 444px;
    flex: none;
    height: 100%;
    padding-left: 4px;
    display: flex;
    align-items: center;
}

.editing-name {
    border: 2px solid #c8c8c8;
    background: #6c6c6c;
    padding-left: 0;
}

.editing-name span {
    height: 100%;
    padding: 0 4px;
    background: #8a8a8a;
    color: #3a3a3a;
    display: flex;
    align-items: center;
}

.mask-name {
    width: 470px;
    background: #717171;
}

.path-name {
    width: 442px;
    background: #757575;
}

.c-mode {
    width: 110px;
    height: 21px;
    margin-left: 4px;
    flex: none;
    font-size: 15.5px;
}

.add-mode {
    width: 100px;
    margin-left: 8px;
}

.c-t {
    width: 21px;
    height: 21px;
    margin-left: 13px;
    flex: none;
    border: 1px solid #666;
    border-bottom: 3px solid #777;
}

.add-mode + .c-t {
    margin-left: 12px;
}

.c-empty {
    width: 124px;
    flex: none;
}

.c-trk {
    width: 105px;
    height: 21px;
    margin-left: 12px;
    flex: none;
    font-size: 15.5px;
}

.c-pi {
    width: 40px;
    flex: none;
    text-align: center;
    font-size: 14px;
    color: #999;
}

.c-trk + .c-pi {
    margin-left: 7px;
}

.c-par {
    width: 148px;
    height: 21px;
    margin-left: 2px;
    flex: none;
    font-size: 15.5px;
}

.m-sp1 {
    width: 86px;
}

.m-sp2 {
    width: 64px;
    flex: none;
}

.m-tw {
    width: 30px;
    padding-left: 4px;
}

.p-sp {
    width: 236px;
    flex: none;
}

.clock-ic {
    width: 12px;
    height: 17px;
    margin: 0 7px 0 3px;
    flex: none;
    border: 2px solid #bbb;
    border-radius: 50%;
}

.invert {
    margin-left: 4px;
}

.shape {
    margin-left: 7px;
    color: #a78c2e;
    font-size: 15.5px;
    text-decoration: underline dotted;
}

.tl-fill {
    flex: 1;
}

.tl-foot {
    height: 28px;
    flex: none;
    display: flex;
    align-items: center;
    padding-left: 10px;
    border-top: 3px solid #474747;
    background: #575757;
}

.tf-ic {
    width: 24px;
    height: 22px;
    margin-right: 6px;
}

.toggle-btn {
    margin-left: 603px;
    width: 270px;
    height: 22px;
    display: flex;
    align-items: center;
    justify-content: center;
    background: linear-gradient(180deg, #666, #4e4e4e);
    border-radius: 4px;
    font-size: 16px;
    color: #aeaeae;
}

/* Timeline tracks */
.tl-right {
    width: 812px;
    flex: none;
    display: flex;
    flex-direction: column;
    position: relative;
}

.ruler {
    position: relative;
    height: 52px;
    flex: none;
    padding-top: 9px;
    border-bottom: 3px solid #444;
}

.workarea {
    height: 13px;
    background: #a6a69f;
    border: solid #c7981e;
    border-width: 0 7px;
}

.ticks {
    display: grid;
    grid-template-columns: 27px repeat(7, 102.6px) 1fr;
    margin-top: 3px;
    font-size: 14.5px;
    line-height: 15px;
    color: #a0a0a0;
}

.ticks span {
    position: relative;
    padding-left: 68px;
    white-space: nowrap;
}

.ticks span::after {
    content: "";
    position: absolute;
    left: 84px;
    top: 16px;
    width: 2px;
    height: 5px;
    background: #8e8e8e;
}

.ticks span:first-child {
    padding-left: 10px;
}

.ticks span:first-child::after {
    content: none;
}

.playhead {
    position: absolute;
    left: -4px;
    bottom: 1px;
    width: 0;
    height: 0;
    border: solid transparent;
    border-width: 19px 9px 0;
    border-top-color: #d6a92a;
}

.track-head {
    height: 28px;
    flex: none;
    background: #9b9b9b;
    border-left: 6px solid #c39423;
    border-right: 6px solid #c39423;
    border-bottom: 3px solid #444;
}

.track {
    position: relative;
    height: 25.3px;
    flex: none;
    background: #5d5d5d;
    border-bottom: 1px solid #525252;
}

.track-first {
    margin-top: 3px;
}

.track-dark {
    border-bottom: 0;
}

.bar {
    display: block;
    height: 100%;
    margin: 0 6px 0 5px;
}

.bar-on {
    background: #b84a5e;
}

.bar-off {
    background: #87303c;
}

.kf-x {
    display: block;
    width: 16px;
    padding-left: 4px;
    font-size: 19px;
    line-height: 24px;
    color: #e2a0aa;
}

.kf-gold {
    display: block;
    width: 14px;
    height: 100%;
    margin-left: 2px;
    background: #b8891f;
}

.tr-fill {
    flex: 1;
    border-top: 3px solid #6a5055;
}

.cti {
    display: block;
    width: 2px;
    height: 100%;
    margin-left: 4px;
    background: #b33c4c;
}

.tr-foot {
    height: 28px;
    flex: none;
    border-top: 3px solid #474747;
    display: flex;
    align-items: center;
    background: #575757;
}

.zm {
    width: 32px;
    height: 22px;
    flex: none;
}

.zm-small {
    width: 18px;
    height: 12px;
    margin-left: 4px;
}

.zoom-slider {
    width: 72px;
    height: 10px;
    margin: 0 18px 0 26px;
    flex: none;
    background: #2e2e2e;
    border-radius: 2px;
}

.zoom-slider i {
    display: block;
    width: 8px;
    height: 16px;
    margin-top: -3px;
    background: #6e6e6e;
}

.tr-hbar {
    display: flex;
    justify-content: space-between;
    align-items: center;
    width: 635px;
    height: 100%;
    margin-left: 6px;
    padding: 0 3px 0 8px;
    background: #4a4a4a;
    color: #9a9a9a;
    font-size: 15px;
}

.tl-side {
    flex: 1;
    display: flex;
    flex-direction: column;
    border-left: 2px solid #3f3f3f;
    align-items: stretch;
    min-width: 0;
}

.ts-top {
    height: 52px;
    flex: none;
}

.ts-nav {
    height: 28px;
    flex: none;
    display: flex;
    justify-content: center;
}

.ts-nav svg,
.ts-zoom svg {
    width: 22px;
    height: 24px;
}

.ts-zoom {
    height: 28px;
    flex: none;
    display: flex;
    justify-content: center;
    align-items: flex-end;
    background: #4a4a4a;
}

.ts-scroll {
    width: 100%;
}

.ts-foot {
    height: 28px;
    flex: none;
}

/* Paragraph */
.paragraph {
    grid-row: 2;
    grid-column: 3;
}

.para-tab {
    width: 132px;
}

.paragraph .tabs {
    border-bottom: 3px solid #3a3a3a;
}

.aligns {
    display: flex;
    gap: 8px;
    padding: 8px 0 0 13px;
    height: 49px;
    margin-bottom: 6px;
    border-bottom: 1px solid #666;
}

.al {
    width: 34px;
    height: 38px;
    display: flex;
    align-items: center;
    justify-content: center;
}

.al svg {
    width: 24px;
    height: 32px;
}

.al-on {
    background: #4a4a4a;
    border: 2px solid #2e2e2e;
    border-radius: 3px;
}

.al-gap {
    margin-left: 5px;
}

.al-gap2 {
    margin-left: 8px;
}

.indents {
    display: grid;
    grid-template-columns: 122px 112px 1fr;
    row-gap: 5px;
    padding-left: 13px;
    font-size: 16px;
    color: #b8b8b8;
}

.ind {
    display: flex;
    align-items: center;
    gap: 6px;
}

.ind svg {
    width: 26px;
    height: 24px;
}

.ind b {
    color: #a78c2e;
    border-bottom: 1px dotted #a78c2e;
}

.desktop-strip {
    height: 5px;
    flex: none;
    background: linear-gradient(90deg, #1e4a18 0, #1c4617 25%, #0c1a0a 32%, #27561e 50%, #18300f 62%, #24521c 100%);
}
```
